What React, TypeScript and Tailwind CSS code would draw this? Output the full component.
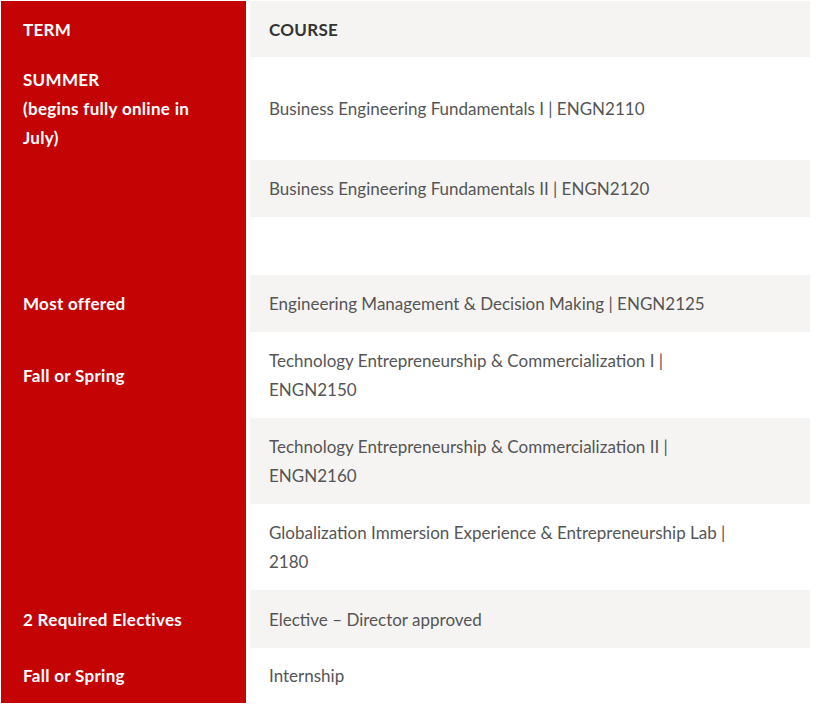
const rows: { term?: string[]; course?: string[]; h: string; shade: boolean }[] = [
  { term: ["SUMMER", "(begins fully online in", "July)"], course: ["Business Engineering Fundamentals I | ENGN2110"], h: "h-[103px]", shade: false },
  { course: ["Business Engineering Fundamentals II | ENGN2120"], h: "h-[57px]", shade: true },
  { h: "h-[58px]", shade: false },
  { term: ["Most offered"], course: ["Engineering Management & Decision Making | ENGN2125"], h: "h-[57px]", shade: true },
  { term: ["Fall or Spring"], course: ["Technology Entrepreneurship & Commercialization I |", "ENGN2150"], h: "h-[86px]", shade: false },
  { course: ["Technology Entrepreneurship & Commercialization II |", "ENGN2160"], h: "h-[86px]", shade: true },
  { course: ["Globalization Immersion Experience & Entrepreneurship Lab |", "2180"], h: "h-[86px]", shade: false },
  { term: ["2 Required Electives"], course: ["Elective – Director approved"], h: "h-[58px]", shade: true },
  { term: ["Fall or Spring"], course: ["Internship"], h: "h-[55px]", shade: false },
];

export default function App() {
  return (
    <div className="w-[816px] h-[706px] bg-white pt-[1px] pl-[1px] pr-[6px] font-['Lato','Open_Sans',sans-serif] text-[17px] leading-[29px]">
      <div className="grid grid-cols-[245px_1fr] gap-x-[4px]">
        <div className="h-[56px] bg-[#c40404] flex items-center px-[22px] font-bold tracking-[0.3px] text-white">TERM</div>
        <div className="h-[56px] bg-[#f5f4f3] flex items-center px-[19px] font-bold tracking-[0.3px] text-[#333]">COURSE</div>
        {rows.map((r, i) => (
          <div key={i} className="contents">
            <div className={`${r.h} bg-[#c40404] flex flex-col justify-center px-[22px] font-bold tracking-[0.3px] text-white`}>
              {r.term?.map((t, j) => <div key={j}>{t}</div>)}
            </div>
            <div className={`${r.h} ${r.shade ? "bg-[#f5f4f3]" : "bg-white"} flex flex-col justify-center px-[19px] text-[#555]`}>
              {r.course?.map((t, j) => <div key={j}>{t}</div>)}
            </div>
          </div>
        ))}
      </div>
    </div>
  );
}
